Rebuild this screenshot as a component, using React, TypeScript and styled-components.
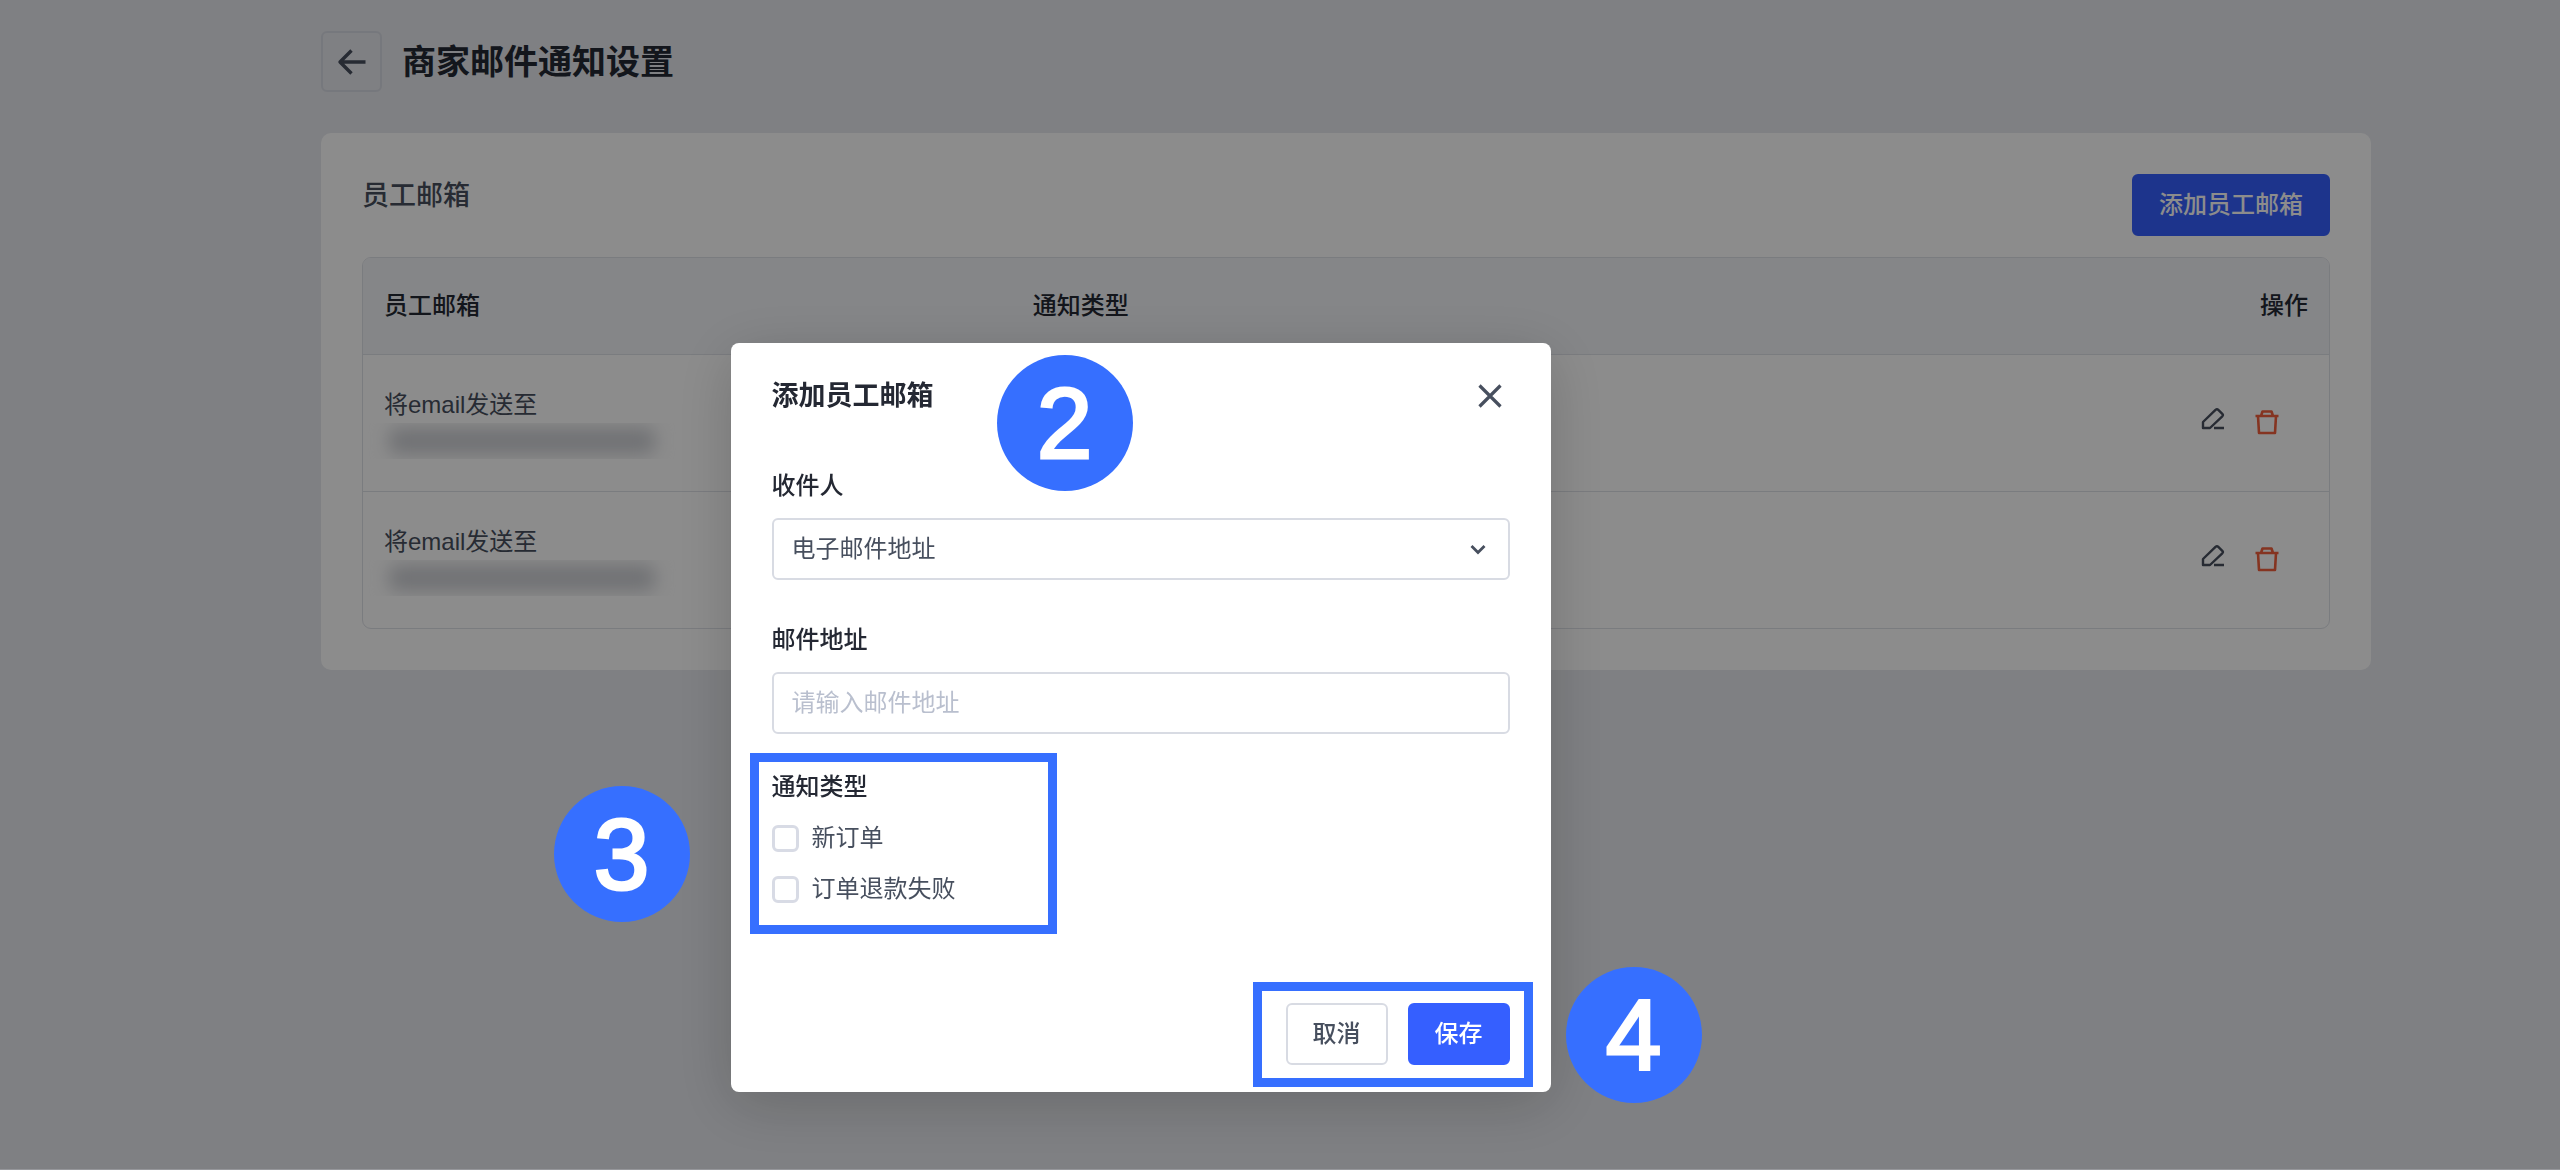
import React from 'react';
import styled, { createGlobalStyle } from 'styled-components';

const GlobalStyle = createGlobalStyle`
  *, *::before, *::after { box-sizing: border-box; }
  body {
    margin: 0;
    background: #e7e9ee;
    color: #242833;
    font-family: "Liberation Sans", "Noto Sans CJK SC", sans-serif;
    font-size: 24px;
    line-height: 36px;
  }
  button, input, select { font: inherit; color: inherit; }
  h1, h2, p { margin: 0; }
`;

const Page = styled.main`
  min-height: 100vh;
  padding: 31px 189px 0 321px;
`;

const PageHeader = styled.header`
  display: flex;
  align-items: center;
  gap: 20px;
  margin-bottom: 41px;
`;

const BackButton = styled.button`
  display: grid;
  place-items: center;
  width: 61px;
  height: 61px;
  padding: 0;
  border: 2px solid #d8dbe3;
  border-radius: 6px;
  background: transparent;
  color: #474f5e;
`;

const PageTitle = styled.h1`
  font-size: 34px;
  font-weight: 700;
  line-height: 48px;
`;

const Card = styled.section`
  padding: 41px;
  border-radius: 10px;
  background: #fff;
`;

const CardHeader = styled.div`
  display: flex;
  justify-content: space-between;
  align-items: flex-start;
  margin-bottom: 21px;
`;

const CardTitle = styled.h2`
  color: #474f5e;
  font-size: 27px;
  font-weight: 500;
  line-height: 44px;
`;

const Button = styled.button<{ $primary?: boolean }>`
  height: 62px;
  padding: 0 25px;
  border: 2px solid ${(p) => (p.$primary ? '#355fff' : '#d8dbe3')};
  border-radius: 6px;
  background: ${(p) => (p.$primary ? '#355fff' : '#fff')};
  color: ${(p) => (p.$primary ? '#fff' : '#474f5e')};
  font-weight: 500;
`;

const TableFrame = styled.div`
  border: 1px solid #dfe2e8;
  border-radius: 9px;
  overflow: hidden;
`;

const Table = styled.table`
  width: 100%;
  border-collapse: collapse;
  table-layout: fixed;
`;

const HeadCell = styled.th<{ $width?: string; $align?: string }>`
  width: ${(p) => p.$width ?? 'auto'};
  height: 96px;
  padding: 0 21px;
  background: #f2f4f7;
  font-weight: 500;
  text-align: ${(p) => p.$align ?? 'left'};
`;

const Cell = styled.td`
  height: 137px;
  padding: 0 21px;
  border-top: 1px solid #dfe2e8;
  color: #474f5e;
`;

const Redacted = styled.div`
  display: flex;
  align-items: center;
  height: 36px;
  margin: 0 -20px;
  padding: 0 25px;
  overflow: hidden;

  &::before {
    content: "";
    width: 266px;
    height: 26px;
    border-radius: 8px;
    background: #ccced3;
    filter: blur(9px);
  }
`;

const Actions = styled.div`
  display: flex;
  justify-content: flex-end;
  align-items: center;
  gap: 26px;
  padding: 0 27px 2px 0;
`;

const IconButton = styled.button<{ $danger?: boolean }>`
  display: grid;
  place-items: center;
  width: 28px;
  height: 30px;
  padding: 0;
  border: 0;
  background: transparent;
  color: ${(p) => (p.$danger ? '#f2603c' : '#474f5e')};
`;

const Overlay = styled.div`
  position: fixed;
  inset: 0;
  display: flex;
  justify-content: center;
  align-items: flex-start;
  padding: 343px 279px 0 0;
  border-bottom: 1px solid rgba(0, 0, 0, 0.35);
  background: rgba(0, 0, 0, 0.45);
  background-clip: padding-box;
`;

const Dialog = styled.form`
  position: relative;
  width: 820px;
  padding: 33px 41px 27px;
  border-radius: 8px;
  background: #fff;
  box-shadow: 0 12px 60px rgba(0, 0, 0, 0.18);
`;

const DialogHeader = styled.div`
  display: flex;
  justify-content: space-between;
  align-items: center;
  margin-bottom: 52px;
`;

const DialogTitle = styled.h2`
  font-size: 27px;
  font-weight: 700;
  line-height: 40px;
`;

const CloseButton = styled(IconButton)`
  width: 40px;
  height: 40px;
`;

const Field = styled.div`
  display: flex;
  flex-direction: column;
  gap: 14px;
  margin-bottom: 42px;
`;

const MailField = styled(Field)`
  margin-bottom: 35px;
`;

const Label = styled.label`
  font-weight: 500;
`;

const SelectWrap = styled.div`
  display: grid;
  align-items: center;

  > * { grid-area: 1 / 1; }
  > svg { justify-self: end; margin-right: 24px; pointer-events: none; color: #474f5e; }
`;

const Select = styled.select`
  appearance: none;
  width: 100%;
  height: 62px;
  padding: 0 18px;
  border: 2px solid #d8dbe3;
  border-radius: 6px;
  background: #fff;
  color: #474f5e;
`;

const Input = styled.input`
  width: 100%;
  height: 62px;
  padding: 0 18px;
  border: 2px solid #d8dbe3;
  border-radius: 6px;

  &::placeholder { color: #b9bfce; opacity: 1; }
`;

const Options = styled.fieldset`
  display: flex;
  flex-direction: column;
  gap: 15px;
  margin: 0 0 96px;
  padding: 0;
  border: 0;
`;

const Legend = styled.legend`
  margin-bottom: 15px;
  padding: 0;
  font-weight: 500;
`;

const Option = styled.label`
  display: flex;
  align-items: center;
  gap: 13px;
  color: #474f5e;
`;

const Checkbox = styled.input`
  appearance: none;
  width: 27px;
  height: 27px;
  margin: 0;
  border: 3px solid #d8dbe5;
  border-radius: 6px;
  background: #fff;

  &:checked { border-color: #355fff; background: #355fff; }
`;

const DialogFooter = styled.div`
  display: flex;
  justify-content: flex-end;
  gap: 20px;
`;

const StepBadge = styled.span<{ $left: number; $top: number }>`
  position: absolute;
  left: ${(p) => p.$left}px;
  top: ${(p) => p.$top}px;
  display: grid;
  place-items: center;
  width: 136px;
  height: 136px;
  border-radius: 50%;
  background: #366fff;
  color: #fff;
  font-family: "Liberation Sans", Arial, sans-serif;
  font-size: 100px;
  line-height: 136px;
  -webkit-text-stroke: 3px #fff;
`;

const Highlight = styled.span<{ $left: number; $top: number; $width: number; $height: number }>`
  position: absolute;
  left: ${(p) => p.$left}px;
  top: ${(p) => p.$top}px;
  width: ${(p) => p.$width}px;
  height: ${(p) => p.$height}px;
  border: 9px solid #366fff;
  pointer-events: none;
`;

const ArrowIcon = () => (
  <svg width="30" height="30" viewBox="0 0 30 30" fill="none" stroke="currentColor" strokeWidth="3.4" strokeLinejoin="round">
    <path d="M28.5 15H3M14.5 3.5L3 15L14.5 26.5" />
  </svg>
);

const EditIcon = () => (
  <svg width="24" height="30" viewBox="0 0 24 30" fill="none" stroke="currentColor" strokeWidth="2.4" strokeLinejoin="round">
    <path d="M2 21V15L14.5 2.8Q16 1.5 17.3 2.8L21.3 6.8Q22.5 8 21.3 9.3L9 21ZM13 21H23" />
  </svg>
);

const TrashIcon = () => (
  <svg width="24" height="26" viewBox="0 0 24 26" fill="none" stroke="currentColor" strokeWidth="2.6" strokeLinejoin="round">
    <path d="M0.5 7H23.5M6 7L7.5 2.5H16.5L18 7M3 7L4 24H20L21 7" />
  </svg>
);

const CloseIcon = () => (
  <svg width="24" height="24" viewBox="0 0 24 24" fill="none" stroke="currentColor" strokeWidth="3.2">
    <path d="M1.5 1.5L22.5 22.5M22.5 1.5L1.5 22.5" />
  </svg>
);

const ChevronIcon = () => (
  <svg width="16" height="12" viewBox="0 0 16 12" fill="none" stroke="currentColor" strokeWidth="2.8">
    <path d="M1.5 3L8 9.5L14.5 3" />
  </svg>
);

const rows = [1, 2];
const noticeTypes = ['新订单', '订单退款失败'];

export default function App() {
  return (
    <>
      <GlobalStyle />
      <Page>
        <PageHeader>
          <BackButton type="button" aria-label="返回"><ArrowIcon /></BackButton>
          <PageTitle>商家邮件通知设置</PageTitle>
        </PageHeader>
        <Card>
          <CardHeader>
            <CardTitle>员工邮箱</CardTitle>
            <Button type="button" $primary>添加员工邮箱</Button>
          </CardHeader>
          <TableFrame>
            <Table>
              <thead>
                <tr>
                  <HeadCell $width="33%">员工邮箱</HeadCell>
                  <HeadCell>通知类型</HeadCell>
                  <HeadCell $width="20%" $align="right">操作</HeadCell>
                </tr>
              </thead>
              <tbody>
                {rows.map((id) => (
                  <tr key={id}>
                    <Cell>
                      <p>将email发送至</p>
                      <Redacted />
                    </Cell>
                    <Cell />
                    <Cell>
                      <Actions>
                        <IconButton type="button" aria-label="编辑"><EditIcon /></IconButton>
                        <IconButton type="button" aria-label="删除" $danger><TrashIcon /></IconButton>
                      </Actions>
                    </Cell>
                  </tr>
                ))}
              </tbody>
            </Table>
          </TableFrame>
        </Card>
      </Page>

      <Overlay>
        <Dialog role="dialog" aria-labelledby="dialog-title" onSubmit={(e) => e.preventDefault()}>
          <DialogHeader>
            <DialogTitle id="dialog-title">添加员工邮箱</DialogTitle>
            <CloseButton type="button" aria-label="关闭"><CloseIcon /></CloseButton>
          </DialogHeader>
          <Field>
            <Label htmlFor="recipient">收件人</Label>
            <SelectWrap>
              <Select id="recipient"><option>电子邮件地址</option></Select>
              <ChevronIcon />
            </SelectWrap>
          </Field>
          <MailField>
            <Label htmlFor="address">邮件地址</Label>
            <Input id="address" type="email" placeholder="请输入邮件地址" />
          </MailField>
          <Options>
            <Legend>通知类型</Legend>
            {noticeTypes.map((name) => (
              <Option key={name}><Checkbox type="checkbox" />{name}</Option>
            ))}
          </Options>
          <DialogFooter>
            <Button type="button">取消</Button>
            <Button type="submit" $primary>保存</Button>
          </DialogFooter>
          <StepBadge $left={266} $top={12}>2</StepBadge>
          <StepBadge $left={-177} $top={443}>3</StepBadge>
          <StepBadge $left={835} $top={624}>4</StepBadge>
          <Highlight $left={19} $top={410} $width={307} $height={181} />
          <Highlight $left={522} $top={639} $width={280} $height={105} />
        </Dialog>
      </Overlay>
    </>
  );
}
